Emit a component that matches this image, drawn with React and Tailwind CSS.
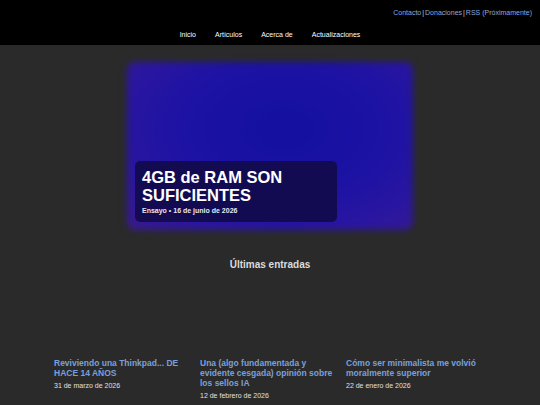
import React from "react";

const posts = [
  { title: "Reviviendo una Thinkpad... DE HACE 14 AÑOS", date: "31 de marzo de 2026" },
  { title: "Una (algo fundamentada y evidente cesgada) opinión sobre los sellos IA", date: "12 de febrero de 2026" },
  { title: "Cómo ser minimalista me volvió moralmente superior", date: "22 de enero de 2026" },
];

export default function App() {
  return (
    <div className="min-h-[405px] bg-[#2a2a2a] font-['Liberation_Sans',Arial,sans-serif]">
      {/* Header */}
      <header className="bg-black h-[45px] flex flex-col">
        <div className="flex justify-end pr-[8px] pt-[8px] text-[7px] leading-[10px] text-[#8ea8dc]">
          <a href="#">Contacto</a>
          <span className="mx-[1px] text-[#cfcfcf]">|</span>
          <a href="#">Donaciones</a>
          <span className="mx-[1px] text-[#cfcfcf]">|</span>
          <a href="#">RSS (Próximamente)</a>
        </div>
        <nav className="flex justify-center gap-[19px] mt-[12px] text-[7px] leading-[9px] text-white">
          <a href="#">Inicio</a>
          <a href="#">Artículos</a>
          <a href="#">Acerca de</a>
          <a href="#">Actualizaciones</a>
        </nav>
      </header>

      {/* Hero */}
      <section className="flex justify-center pt-[17px]">
        <div className="relative w-[286px] h-[168px]">
          <div className="absolute inset-0 rounded-[8px] blur-[3px] bg-[#1e12a0] bg-[radial-gradient(ellipse_at_55%_40%,#1410a0_0%,#1c12a4_45%,#2a16a0_75%,#3a1a8c_100%)]" />
          <div className="absolute left-[8px] bottom-[8px] w-[202px] rounded-[5px] bg-[#120b4cee] px-[7px] pt-[7px] pb-[6px]">
            <h1 className="text-white font-bold text-[16.5px] leading-[18px]">4GB de RAM SON SUFICIENTES</h1>
            <p className="text-[#e6e6f0] font-bold text-[7px] leading-[10px] mt-[2px]">Ensayo • 16 de junio de 2026</p>
          </div>
        </div>
      </section>

      {/* Latest */}
      <h2 className="text-center text-[#dcdcdc] font-bold text-[10px] leading-[12px] mt-[29px]">Últimas entradas</h2>

      <div className="grid grid-cols-3 gap-[6px] w-[432px] mx-auto mt-[87px] pb-[8px]">
        {posts.map((p) => (
          <div key={p.title}>
            <a href="#" className="block text-[#7aa0da] font-bold text-[8.5px] leading-[10px]">{p.title}</a>
            <div className="text-[#e0e0e0] text-[7px] leading-[9px] mt-[3px]">{p.date}</div>
          </div>
        ))}
      </div>
    </div>
  );
}
